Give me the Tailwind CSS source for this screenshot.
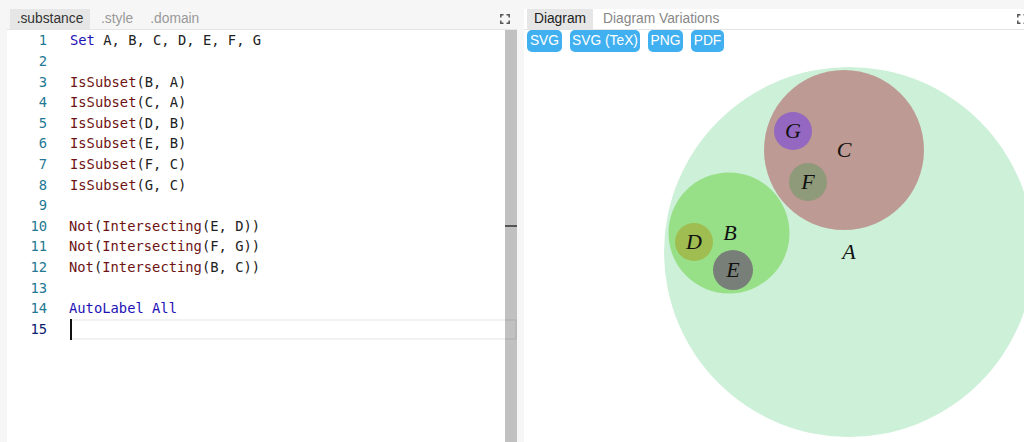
<!DOCTYPE html>
<html lang="en">
<head>
<meta charset="UTF-8">
<title>Penrose editor</title>
<script src="https://cdn.jsdelivr.net/npm/@tailwindcss/browser@4"></script>
</head>
<body class="w-[1024px] h-[442px] overflow-hidden bg-[#f6f6f6] pt-[9px] font-['Liberation_Sans',sans-serif]">
<div class="flex h-[433px]">

  <!-- Editor pane -->
  <div class="w-[517px] ml-[7px] flex flex-col bg-white">
    <div class="h-[21px] flex items-stretch bg-[#f6f6f6] border-b border-[#e4e4e4] text-[13.8px] leading-[20px] text-[#999]">
      <div class="ml-[3px] w-[80px] text-center bg-[#e6e6e6] text-[#333]">.substance</div>
      <div class="ml-[11px]">.style</div>
      <div class="ml-[17px]">.domain</div>
      <div class="ml-auto mr-[7px] flex items-center">
        <svg width="10" height="10" viewBox="0 0 10 10" fill="none" stroke="#555" stroke-width="1.5"><path d="M0.8 3.5V0.8H3.5M6.5 0.8H9.2V3.5M9.2 6.5V9.2H6.5M3.5 9.2H0.8V6.5"/></svg>
      </div>
    </div>
    <div class="relative flex-1 flex overflow-hidden">
      <div class="flex-1 pt-[0.4px] font-['DejaVu_Sans_Mono',monospace] text-[13.8px] leading-[20.6px] text-[#222] whitespace-nowrap">
        <div class="flex h-[20.6px]"><span class="w-[40px] text-right text-[#237893]">1</span><span class="ml-[23px]"><span class="text-[#1e12b5]">Set</span> A, B, C, D, E, F, G</span></div>
        <div class="flex h-[20.6px]"><span class="w-[40px] text-right text-[#237893]">2</span></div>
        <div class="flex h-[20.6px]"><span class="w-[40px] text-right text-[#237893]">3</span><span class="ml-[23px]"><span class="text-[#6e1313]">IsSubset</span>(B, A)</span></div>
        <div class="flex h-[20.6px]"><span class="w-[40px] text-right text-[#237893]">4</span><span class="ml-[23px]"><span class="text-[#6e1313]">IsSubset</span>(C, A)</span></div>
        <div class="flex h-[20.6px]"><span class="w-[40px] text-right text-[#237893]">5</span><span class="ml-[23px]"><span class="text-[#6e1313]">IsSubset</span>(D, B)</span></div>
        <div class="flex h-[20.6px]"><span class="w-[40px] text-right text-[#237893]">6</span><span class="ml-[23px]"><span class="text-[#6e1313]">IsSubset</span>(E, B)</span></div>
        <div class="flex h-[20.6px]"><span class="w-[40px] text-right text-[#237893]">7</span><span class="ml-[23px]"><span class="text-[#6e1313]">IsSubset</span>(F, C)</span></div>
        <div class="flex h-[20.6px]"><span class="w-[40px] text-right text-[#237893]">8</span><span class="ml-[23px]"><span class="text-[#6e1313]">IsSubset</span>(G, C)</span></div>
        <div class="flex h-[20.6px]"><span class="w-[40px] text-right text-[#237893]">9</span></div>
        <div class="flex h-[20.6px]"><span class="w-[40px] text-right text-[#237893]">10</span><span class="ml-[22px]"><span class="text-[#6e1313]">Not</span>(<span class="text-[#6e1313]">Intersecting</span>(E, D))</span></div>
        <div class="flex h-[20.6px]"><span class="w-[40px] text-right text-[#237893]">11</span><span class="ml-[22px]"><span class="text-[#6e1313]">Not</span>(<span class="text-[#6e1313]">Intersecting</span>(F, G))</span></div>
        <div class="flex h-[20.6px]"><span class="w-[40px] text-right text-[#237893]">12</span><span class="ml-[22px]"><span class="text-[#6e1313]">Not</span>(<span class="text-[#6e1313]">Intersecting</span>(B, C))</span></div>
        <div class="flex h-[20.6px]"><span class="w-[40px] text-right text-[#237893]">13</span></div>
        <div class="flex h-[20.6px]"><span class="w-[40px] text-right text-[#237893]">14</span><span class="ml-[22px] text-[#1e12b5]">AutoLabel All</span></div>
        <div class="flex h-[20.6px]"><span class="w-[40px] text-right text-[#0b216f]">15</span></div>
      </div>
      <!-- scrollbar -->
      <div class="w-[12px] bg-[#c1c1c1] pt-[195px]">
        <div class="h-[2px] bg-[#555]"></div>
      </div>
      <!-- current line highlight and caret -->
      <div class="absolute left-[63px] right-0 top-[289px] h-[21px] border-y-2 border-r-2 border-black/5"></div>
      <div class="absolute left-[63px] top-[289px] w-[2px] h-[21px] bg-[#111]"></div>
    </div>
  </div>

  <div class="w-[7px]"></div>

  <!-- Diagram pane -->
  <div class="w-[500px] flex flex-col bg-white">
    <div class="h-[21px] flex items-stretch border-b border-[#e4e4e4] text-[13.8px] leading-[20px] text-[#888]">
      <div class="ml-[3px] w-[66px] text-center bg-[#e6e6e6] text-[#222]">Diagram</div>
      <div class="ml-[10px]">Diagram Variations</div>
      <div class="ml-auto -mr-[3px] flex items-center">
        <svg width="10" height="10" viewBox="0 0 10 10" fill="none" stroke="#555" stroke-width="1.5"><path d="M0.8 3.5V0.8H3.5M6.5 0.8H9.2V3.5M9.2 6.5V9.2H6.5M3.5 9.2H0.8V6.5"/></svg>
      </div>
    </div>
    <div class="h-[22px] pl-[3px] flex gap-[8px] text-[13.8px] leading-[22px] text-white">
      <div class="w-[35px] text-center rounded-[5px] bg-[#40b0f0]">SVG</div>
      <div class="w-[70px] text-center rounded-[5px] bg-[#40b0f0]">SVG (TeX)</div>
      <div class="w-[35px] text-center rounded-[5px] bg-[#40b0f0]">PNG</div>
      <div class="w-[33px] text-center rounded-[5px] bg-[#40b0f0]">PDF</div>
    </div>
    <svg class="block" width="500" height="390" viewBox="524 52 500 390" font-family="'Liberation Serif', serif" font-style="italic" font-size="22" fill="#111" text-anchor="middle">
      <circle cx="849" cy="252" r="185" fill="#cdf0d8"/>
      <circle cx="844" cy="150" r="80" fill="#bd9a93"/>
      <circle cx="729" cy="233" r="60.5" fill="#97e088"/>
      <circle cx="793" cy="131" r="19" fill="#9468c0"/>
      <circle cx="808" cy="182" r="19" fill="#8f9a7a"/>
      <circle cx="694" cy="242" r="19" fill="#9fbd50"/>
      <circle cx="733" cy="270" r="20" fill="#787f78"/>
      <text x="849" y="259">A</text>
      <text x="730" y="240">B</text>
      <text x="844" y="157">C</text>
      <text x="694" y="249">D</text>
      <text x="733" y="277">E</text>
      <text x="808" y="189">F</text>
      <text x="793" y="138">G</text>
    </svg>
  </div>
</div>
</body>
</html>
